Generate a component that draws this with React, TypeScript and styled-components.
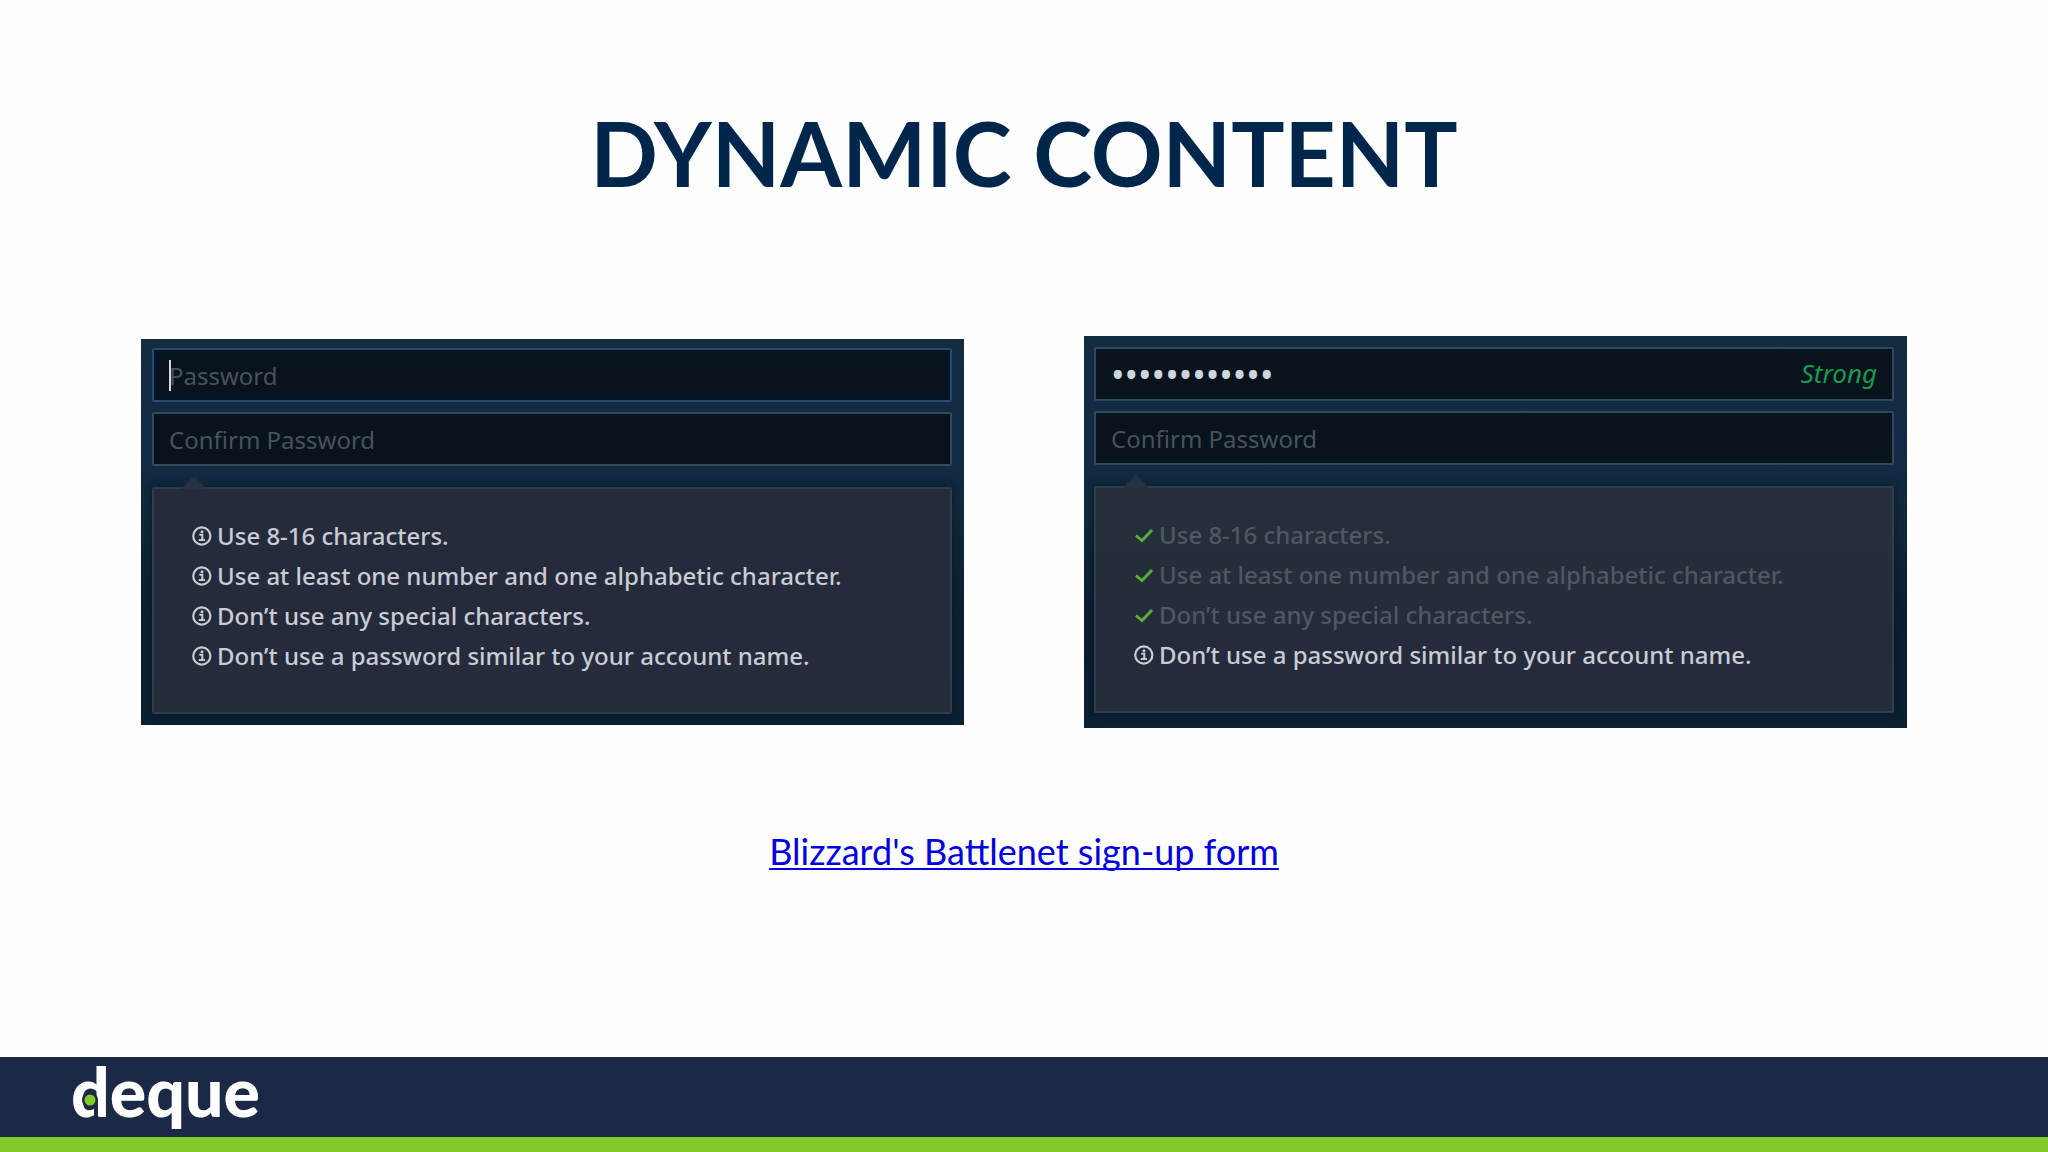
import React from "react";
import styled, { createGlobalStyle, css } from "styled-components";

const GlobalStyle = createGlobalStyle`
  * { box-sizing: border-box; }
  body { margin: 0; background: #fefefe; }
`;

const Slide = styled.div`
  display: flex;
  flex-direction: column;
  min-height: 100vh;
  font-family: Lato, "Liberation Sans", sans-serif;
`;

const Content = styled.main`
  flex: 1;
  display: flex;
  flex-direction: column;
  align-items: center;
  padding-top: 99px;
`;

const Title = styled.h1`
  margin: 0;
  font-size: 89px;
  line-height: 108px;
  font-weight: 700;
  color: #00264c;
`;

const Examples = styled.div`
  align-self: stretch;
  display: grid;
  grid-template-columns: 1fr 1fr;
  gap: 120px;
  align-items: center;
  margin-top: 129px;
  padding: 0 141px;
`;

const Panel = styled.form<{ $roomy?: boolean }>`
  display: flex;
  flex-direction: column;
  padding: ${(p) => (p.$roomy ? "11px 13px 15px 10px" : "9px 12px 11px 11px")};
  background: linear-gradient(#122c40, #132a46 28%, #11293c 45%, #0c1f32 70%, #0b2033);
  font-family: "Noto Sans", "Open Sans", sans-serif;
  font-size: 24px;
`;

const Field = styled.label`
  position: relative;
  display: block;
  & + & { margin-top: 10px; }
`;

const fieldFocus = css`
  border-color: #284a6c;
  box-shadow: inset 0 0 8px #001a3c;
`;

const Input = styled.input<{ $focused?: boolean }>`
  display: block;
  width: 100%;
  height: 54px;
  padding: 0 15px;
  border: 2px solid #334858;
  border-radius: 2px;
  background: #08131d;
  color: #d0d5dc;
  font-family: inherit;
  font-size: 24px;
  outline: none;
  ${(p) => p.$focused && fieldFocus}
  &::placeholder { color: #48525d; opacity: 1; }
  &[type="password"]:not(:placeholder-shown) { font-size: 36px; }
`;

const Caret = styled.span`
  position: absolute;
  left: 17px;
  top: 12px;
  width: 2px;
  height: 31px;
  background: #d5dae0;
`;

const Strength = styled.output`
  position: absolute;
  right: 17px;
  top: 0;
  font-size: 26px;
  line-height: 52px;
  font-style: italic;
  color: #189a4e;
`;

const Rules = styled.ul<{ $tint?: string }>`
  position: relative;
  margin: 21px 0 0;
  padding: 27px 38px 36px;
  list-style: none;
  border: 2px solid #2f3e4b;
  border-radius: 2px;
  background: linear-gradient(${(p) => p.$tint ?? "#262b3c"}, #262b3b 70%, #252d3b);
  box-shadow: 0 0 8px #081828;
  &::before {
    content: "";
    position: absolute;
    left: 27px;
    top: -13px;
    border: 13px solid transparent;
    border-top: 0;
    border-bottom-color: #26323f;
  }
`;

const Rule = styled.li<{ $done?: boolean }>`
  display: flex;
  align-items: center;
  gap: 5px;
  line-height: 40px;
  font-weight: 500;
  color: ${(p) => (p.$done ? "#505763" : "#c8ccd5")};
  svg { flex: none; }
`;

const Source = styled.a`
  margin-top: 101px;
  font-size: 36px;
  line-height: 44px;
  color: #0000e0;
  text-decoration-thickness: 2px;
  text-underline-offset: 3px;
  text-decoration-skip-ink: none;
`;

const Footer = styled.footer`
  display: flex;
  height: 95px;
  padding-left: 64px;
  background: #1b2947;
  border-bottom: 15px solid #80cb28;
`;

const InfoIcon = () => (
  <svg width="20" height="20" viewBox="0 0 20 20" fill="none" stroke="currentColor" aria-hidden="true">
    <circle cx="9.8" cy="10" r="8.6" strokeWidth="2.2" />
    <path d="M7.3 8.7h3v5M6.8 14h6.2" strokeWidth="2" />
    <circle cx="10" cy="5.7" r="1.5" fill="currentColor" stroke="none" />
  </svg>
);

const CheckIcon = () => (
  <svg width="20" height="20" viewBox="0 0 20 20" fill="none" aria-hidden="true">
    <path d="M2 10.5l6 5L18 5" stroke="#1d4718" strokeWidth="4.4" />
    <path d="M2 10.5l6 5L18 5" stroke="#5fa84a" strokeWidth="2.8" />
  </svg>
);

const Logo = () => (
  <svg width="220" height="80" viewBox="0 0 220 80" overflow="visible" role="img" aria-label="deque">
    <text x="7" y="60" fontFamily="Lato, sans-serif" fontWeight="900" fontSize="68" fill="#fff">deque</text>
    <circle cx="26" cy="43" r="8" fill="#1b2947" />
    <path d="M32 44v18" stroke="#1b2947" strokeWidth="4" />
    <circle cx="26" cy="43" r="5.5" fill="#80cb28" />
  </svg>
);

const rules = [
  "Use 8-16 characters.",
  "Use at least one number and one alphabetic character.",
  "Don’t use any special characters.",
  "Don’t use a password similar to your account name.",
];

const RuleList = ({ done = 0, tint }: { done?: number; tint?: string }) => (
  <Rules $tint={tint}>
    {rules.map((text, i) => (
      <Rule key={text} $done={i < done}>
        {i < done ? <CheckIcon /> : <InfoIcon />}
        {text}
      </Rule>
    ))}
  </Rules>
);

export default function App() {
  return (
    <Slide>
      <GlobalStyle />
      <Content>
        <Title>DYNAMIC CONTENT</Title>
        <Examples>
          <Panel>
            <Field>
              <Input type="password" placeholder="Password" aria-label="Password" $focused />
              <Caret />
            </Field>
            <Field>
              <Input type="password" placeholder="Confirm Password" aria-label="Confirm Password" />
            </Field>
            <RuleList />
          </Panel>
          <Panel $roomy>
            <Field>
              <Input type="password" placeholder="Password" aria-label="Password" defaultValue="abcdefgh1234" />
              <Strength>Strong</Strength>
            </Field>
            <Field>
              <Input type="password" placeholder="Confirm Password" aria-label="Confirm Password" />
            </Field>
            <RuleList done={3} tint="#25303c" />
          </Panel>
        </Examples>
        <Source href="#signup">Blizzard's Battlenet sign-up form</Source>
      </Content>
      <Footer>
        <Logo />
      </Footer>
    </Slide>
  );
}
